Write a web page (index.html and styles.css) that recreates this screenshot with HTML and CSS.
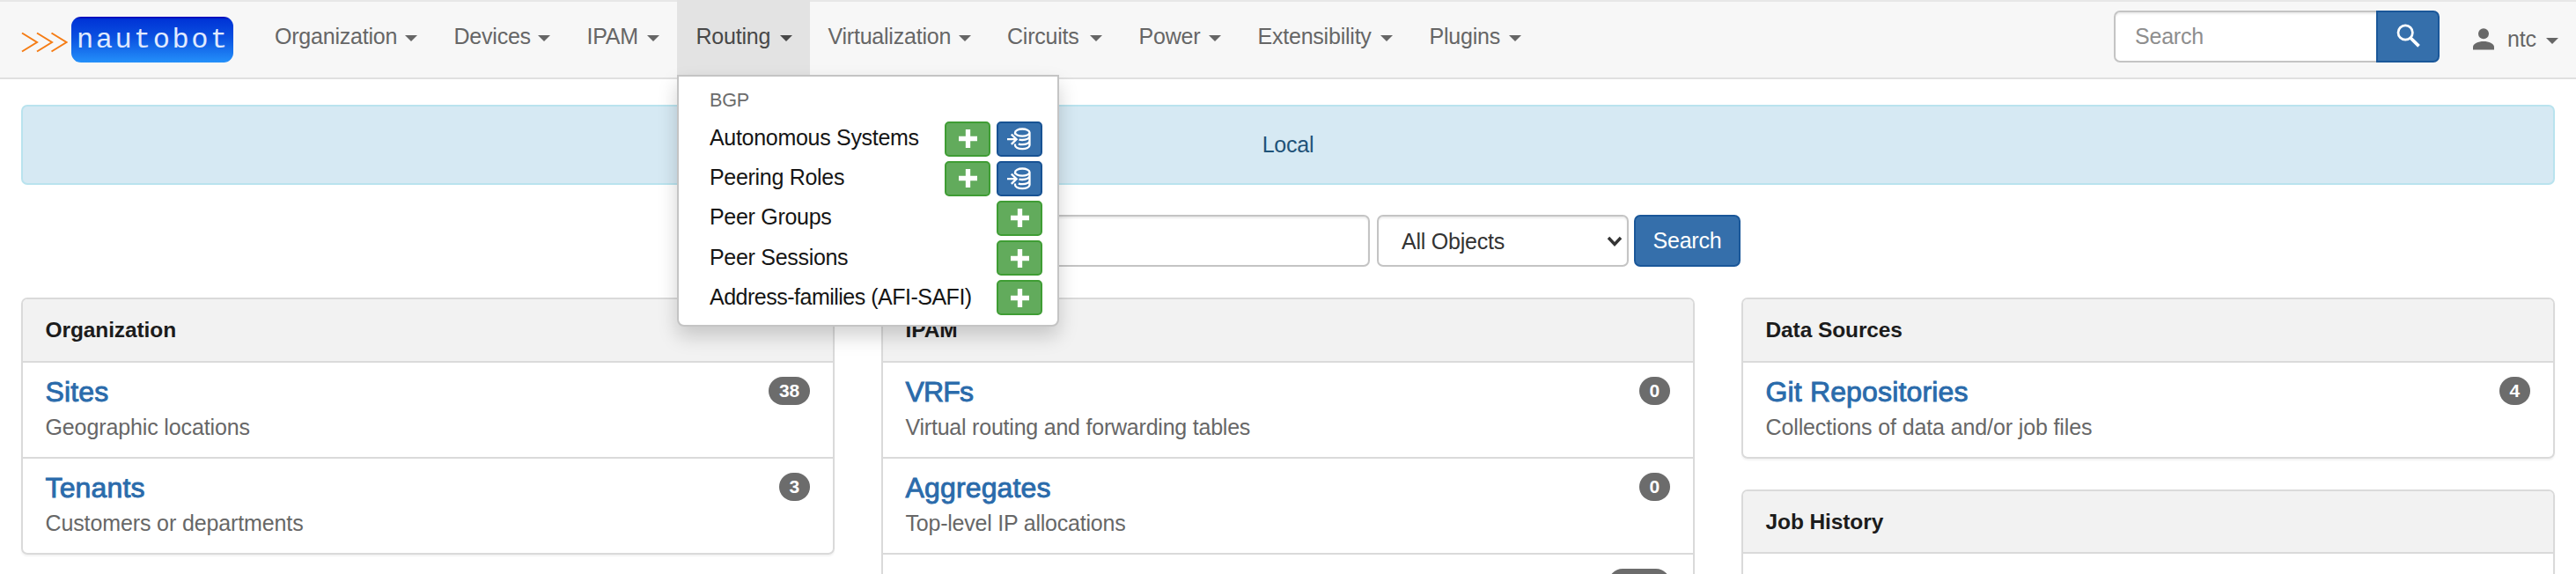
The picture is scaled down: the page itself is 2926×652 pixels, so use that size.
FILE: index.html
```html
<!DOCTYPE html>
<html lang="en">
<head>
<meta charset="utf-8">
<title>Home - Nautobot</title>
<link rel="stylesheet" href="styles.css">
</head>
<body>
<svg class="sprite" width="0" height="0">
  <symbol id="plus" viewBox="0 0 22 22"><path d="M8.2 0h5.6v8.2H22v5.6h-8.2V22H8.2v-8.2H0V8.2h8.2z" fill="currentColor"/></symbol>
  <symbol id="import" viewBox="0 0 28 26"><g fill="none" stroke="currentColor" stroke-width="2.3"><path d="M9 7.800V5.600C9 3.300 12.600 1.500 17.200 1.500s8.300 1.800 8.300 4.100V20c0 2.400-3.600 4.200-8.300 4.200S9 22.400 9 20v-1.500M9 5.600c0 2.300 3.600 4.100 8.200 4.100s8.300-1.800 8.300-4.100M13.500 13.600c1.200.3 2.400.4 3.700.4 4.700 0 8.300-1.800 8.300-4.200M12.800 18.600c1.400.4 2.900.6 4.400.6 4.700 0 8.300-1.800 8.300-4.200M0 13.200h10M4.800 7.600l5.800 5.600-5.800 5.600"/></g></symbol>
</svg>
<nav class="navbar">
  <a class="brand" href="#">
    <svg class="chevrons" width="53" height="24" viewBox="0 0 53 24"><path d="M1 1.500 18 12 1 22.500M18 1.500 35 12 18 22.500M34.500 1.500 51.500 12 34.500 22.500" fill="none" stroke="#f57c14" stroke-width="2"/></svg>
    <span class="wordmark">nautobot</span>
  </a>
  <ul class="menu">
    <li class="organization"><a href="#">Organization</a><i class="caret"></i></li>
    <li class="devices"><a href="#">Devices</a><i class="caret"></i></li>
    <li class="ipam"><a href="#">IPAM</a><i class="caret"></i></li>
    <li class="routing open"><a href="#">Routing</a><i class="caret"></i>
      <div class="dropdown">
        <div class="dropdown-header">BGP</div>
        <div class="entry"><span>Autonomous Systems</span><b class="btn add"><svg><use href="#plus"/></svg></b><b class="btn import"><svg><use href="#import"/></svg></b></div>
        <div class="entry"><span>Peering Roles</span><b class="btn add"><svg><use href="#plus"/></svg></b><b class="btn import"><svg><use href="#import"/></svg></b></div>
        <div class="entry"><span>Peer Groups</span><b class="btn add"><svg><use href="#plus"/></svg></b></div>
        <div class="entry"><span>Peer Sessions</span><b class="btn add"><svg><use href="#plus"/></svg></b></div>
        <div class="entry long"><span>Address-families (AFI-SAFI)</span><b class="btn add"><svg><use href="#plus"/></svg></b></div>
      </div>
    </li>
    <li class="virtualization"><a href="#">Virtualization</a><i class="caret"></i></li>
    <li class="circuits"><a href="#">Circuits</a><i class="caret"></i></li>
    <li class="power"><a href="#">Power</a><i class="caret"></i></li>
    <li class="extensibility"><a href="#">Extensibility</a><i class="caret"></i></li>
    <li class="plugins"><a href="#">Plugins</a><i class="caret"></i></li>
  </ul>
  <div class="nav-search">
    <div class="nav-input">Search</div>
    <div class="nav-go"><svg width="28" height="28" viewBox="0 0 28 28" fill="none" stroke="#fff"><circle cx="10.200" cy="10" r="8.200" stroke-width="2.700"/><path d="M16 16 25.500 25.300" stroke-width="3.800"/></svg></div>
  </div>
  <div class="user">
    <svg width="24" height="25" viewBox="0 0 24 25"><circle cx="12" cy="6.200" r="6" fill="#696969"/><path d="M0 24.500v-3c0-4 6-6.500 12-6.500s12 2.500 12 6.500v3z" fill="#696969"/></svg>
    <span>ntc</span><i class="caret"></i>
  </div>
</nav>
<main>
  <div class="alert">Local</div>
  <form class="search">
    <div class="field query"></div>
    <div class="field select"><span>All Objects</span><svg width="18" height="12" viewBox="0 0 18 12"><path d="M2 2l7 7.500L16 2" fill="none" stroke="#333" stroke-width="3.400"/></svg></div>
    <div class="submit">Search</div>
  </form>
  <div class="columns">
    <section class="column">
      <div class="panel">
        <h2>Organization</h2>
        <div class="item"><div><h4>Sites</h4><p>Geographic locations</p></div><span class="badge">38</span></div>
        <div class="item"><div><h4>Tenants</h4><p>Customers or departments</p></div><span class="badge">3</span></div>
      </div>
    </section>
    <section class="column">
      <div class="panel">
        <h2>IPAM</h2>
        <div class="item"><div><h4 class="tight">VRFs</h4><p class="snug">Virtual routing and forwarding tables</p></div><span class="badge">0</span></div>
        <div class="item"><div><h4>Aggregates</h4><p class="snug">Top-level IP allocations</p></div><span class="badge">0</span></div>
        <div class="item"><div></div><span class="badge wide"></span></div>
      </div>
    </section>
    <section class="column">
      <div class="panel">
        <h2>Data Sources</h2>
        <div class="item"><div><h4>Git Repositories</h4><p>Collections of data and/or job files</p></div><span class="badge">4</span></div>
      </div>
      <div class="panel">
        <h2>Job History</h2>
        <div class="item"></div>
      </div>
    </section>
  </div>
</main>
</body>
</html>
```

FILE: styles.css
```css
* { box-sizing: border-box; }
body {
  margin: 0;
  height: 652px;
  background: #fff;
  color: #333;
  font: 25px/36px "Liberation Sans", Arial, sans-serif;
  letter-spacing: -0.22px;
}
.sprite { display: block; }
a { color: inherit; text-decoration: none; }
h2, h4, p, ul { margin: 0; padding: 0; }

.navbar {
  display: flex;
  height: 90px;
  padding-left: 24px;
  background: #f7f7f7;
  border-bottom: 2px solid #e0e0e0;
  box-shadow: inset 0 2px #e7e7e7;
  color: #666;
}
.brand { display: flex; width: 266.500px; }
.chevrons { margin: 36px 4px 0 0; }
.wordmark {
  width: 184px;
  height: 52px;
  margin-top: 19px;
  padding-left: 6px;
  border-radius: 11px;
  background: linear-gradient(#0000b4 0, #0034d6 3px, #0a50e0 45%, #2490fa 100%);
  color: #e0eaff;
  font: 32px/53px "Liberation Mono", monospace;
  letter-spacing: 2.500px;
}
.menu { display: flex; list-style: none; }
.menu li {
  position: relative;
  display: flex;
  justify-content: space-between;
  height: 88px;
  padding: 0 20.500px 0 21.500px;
  line-height: 82px;
}
.caret {
  margin-top: 39.500px;
  width: 0;
  height: 0;
  border: 7px solid transparent;
  border-top: 7.500px solid currentColor;
  border-bottom: 0;
}
.organization { width: 203.500px; }
.devices { width: 151px; }
.ipam { width: 124px; }
.routing { width: 151px; }
.virtualization { width: 203.500px; }
.circuits { width: 148.500px; }
.power { width: 135px; }
.extensibility { width: 195px; }
.plugins { width: 146px; }
.virtualization a, .circuits a { margin-left: -1px; }
.open { background: #e3e3e3; color: #484848; }

.dropdown {
  position: absolute;
  z-index: 5;
  top: 85px;
  left: 0;
  width: 434px;
  height: 286px;
  padding: 9px 17px 0 35px;
  background: #fff;
  border: 2px solid #c4c4c4;
  border-radius: 0 0 8px 8px;
  box-shadow: 0 11px 22px rgba(0, 0, 0, .18);
  color: #151515;
}
.dropdown-header { margin-bottom: 3px; color: #6c6c6c; font-size: 21.600px; line-height: 36px; }
.entry { display: flex; align-items: center; gap: 7px; height: 45.200px; line-height: 43px; white-space: nowrap; }
.entry span { flex: 1; height: 45px; letter-spacing: -.3px; }
.entry.long span { letter-spacing: -.5px; }
.btn {
  display: flex;
  align-items: center;
  justify-content: center;
  width: 52px;
  height: 40px;
  border: 2px solid;
  border-radius: 5px;
}
.btn svg { width: 21px; height: 21px; color: #fff; }
.btn.import svg { width: 28px; height: 26px; margin-right: 1px; }
.add { background: #62ab5c; border-color: #3f9d34; }
.import { background: #356fab; border-color: #175293; }

.nav-search { display: flex; margin: 12px 0 0 auto; height: 59px; }
.nav-input {
  width: 298px;
  padding-left: 22px;
  border: 2px solid #c4c4c4;
  border-right: 0;
  border-radius: 7px 0 0 7px;
  background: #fff;
  box-shadow: inset 0 2px 2px rgba(0, 0, 0, .075);
  color: #8e8e8e;
  line-height: 55px;
}
.nav-go {
  width: 72px;
  padding: 13px 0 0 21px;
  border: 2px solid #1a5799;
  border-radius: 0 7px 7px 0;
  background: #356fab;
}
.user { display: flex; width: 155px; padding: 32px 19px 0 38px; }
.user span { margin: -6px 11px 0 15px; line-height: 36px; }
.user .caret { margin-top: 11px; }

main { height: 562px; padding: 29px 24px 0; overflow: hidden; }
.alert {
  height: 91px;
  border: 2px solid #b9e3ee;
  border-radius: 7px;
  background: #d6e9f3;
  color: #1f5378;
  line-height: 87px;
  text-align: center;
}
.search { display: flex; justify-content: center; height: 59px; margin: 34px 0 35px; }
.field {
  height: 59px;
  border: 2px solid #c4c4c4;
  border-radius: 7px;
  box-shadow: inset 0 2px 2px rgba(0, 0, 0, .075);
}
.query { width: 607px; margin-right: 8px; }
.select { display: flex; width: 286px; margin-right: 6px; padding: 0 5px 0 26px; align-items: center; justify-content: space-between; }
.submit {
  width: 121px;
  border: 2px solid #1a5799;
  border-radius: 7px;
  background: #356fab;
  color: #fff;
  line-height: 55px;
  text-align: center;
}

.columns { display: grid; grid-template-columns: repeat(3, 1fr); gap: 53px; }
.panel {
  margin-bottom: 35px;
  border: 2px solid #dadada;
  border-radius: 7px;
  box-shadow: 0 2px 2px rgba(0, 0, 0, .05);
}
.panel h2 {
  height: 69.500px;
  padding-left: 25.500px;
  border-radius: 5px 5px 0 0;
  background: #f2f2f2;
  color: #1c1c1c;
  font-size: 24.500px;
  letter-spacing: -.1px;
  line-height: 70px;
}
.item {
  display: flex;
  justify-content: space-between;
  height: 109.200px;
  padding: 16px 26px 0 25.500px;
  border-top: 2px solid #dadada;
}
.item:last-child { height: 109px; }
.item h4 {
  color: #2a6bab;
  font-size: 32px;
  font-weight: 400;
  letter-spacing: .15px;
  line-height: 35px;
  -webkit-text-stroke: .9px #2a6bab;
}
.item h4.tight { letter-spacing: -.8px; }
.item p { margin-top: 4px; color: #676767; line-height: 36px; letter-spacing: -.12px; }
.item p.snug { letter-spacing: -.22px; }
.badge {
  height: 32px;
  padding: 0 12px;
  border-radius: 16px;
  background: #6c6c6c;
  color: #fff;
  font-size: 21px;
  font-weight: 700;
  line-height: 32px;
}
.wide { width: 70px; }
```
